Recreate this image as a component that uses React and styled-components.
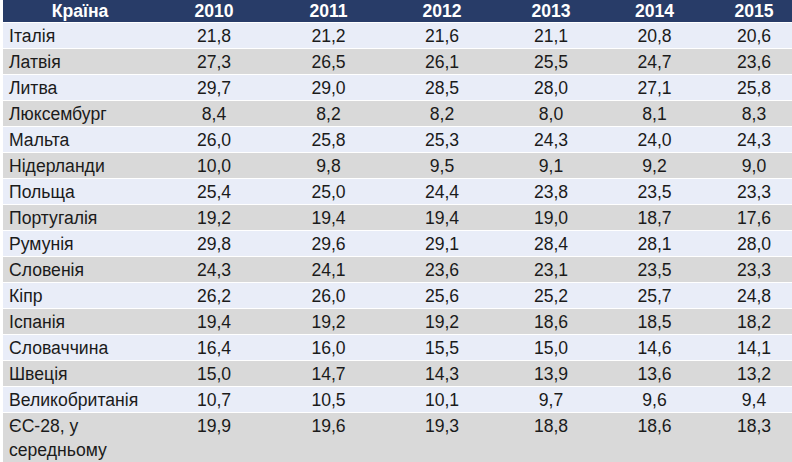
import React from "react";
import styled, { createGlobalStyle } from "styled-components";

const GlobalStyle = createGlobalStyle`
  html, body {
    margin: 0;
    padding: 0;
    background: #fff;
    overflow: hidden;
  }
  body {
    font-family: "Liberation Sans", Arial, sans-serif;
  }
`;

const Page = styled.div`
  width: 792px;
  height: 462px;
  overflow: hidden;
  padding-left: 3px;
  box-sizing: border-box;
`;

const Table = styled.table`
  width: 800px;
  table-layout: fixed;
  border-collapse: collapse;
  font-size: 17.6px;
  color: #1b1b1b;
`;

const HeadCell = styled.th`
  background: #283c68;
  color: #fff;
  font-weight: bold;
  height: 22px;
  line-height: 20px;
  padding: 0 6px;
  text-align: center;
  box-sizing: border-box;
`;

const Row = styled.tr`
  background: ${(p) => (p.$alt ? "#d9d9d9" : "#e9edf8")};
  border-top: 1px solid #fff;
`;

const Cell = styled.td`
  line-height: 24px;
  padding: 1px 6px 0;
  vertical-align: top;
  text-align: ${(p) => (p.$left ? "left" : "center")};
  box-sizing: border-box;
`;

const widths = [154, 114, 115, 112, 106, 101, 98];
const years = ["2010", "2011", "2012", "2013", "2014", "2015"];

const data = [
  ["Італія", "21,8", "21,2", "21,6", "21,1", "20,8", "20,6"],
  ["Латвія", "27,3", "26,5", "26,1", "25,5", "24,7", "23,6"],
  ["Литва", "29,7", "29,0", "28,5", "28,0", "27,1", "25,8"],
  ["Люксембург", "8,4", "8,2", "8,2", "8,0", "8,1", "8,3"],
  ["Мальта", "26,0", "25,8", "25,3", "24,3", "24,0", "24,3"],
  ["Нідерланди", "10,0", "9,8", "9,5", "9,1", "9,2", "9,0"],
  ["Польща", "25,4", "25,0", "24,4", "23,8", "23,5", "23,3"],
  ["Португалія", "19,2", "19,4", "19,4", "19,0", "18,7", "17,6"],
  ["Румунія", "29,8", "29,6", "29,1", "28,4", "28,1", "28,0"],
  ["Словенія", "24,3", "24,1", "23,6", "23,1", "23,5", "23,3"],
  ["Кіпр", "26,2", "26,0", "25,6", "25,2", "25,7", "24,8"],
  ["Іспанія", "19,4", "19,2", "19,2", "18,6", "18,5", "18,2"],
  ["Словаччина", "16,4", "16,0", "15,5", "15,0", "14,6", "14,1"],
  ["Швеція", "15,0", "14,7", "14,3", "13,9", "13,6", "13,2"],
  ["Великобританія", "10,7", "10,5", "10,1", "9,7", "9,6", "9,4"],
  ["ЄС-28, у середньому", "19,9", "19,6", "19,3", "18,8", "18,6", "18,3"],
];

export default function App() {
  return (
    <Page>
      <GlobalStyle />
      <Table>
        <colgroup>
          {widths.map((w, i) => (
            <col key={i} style={{ width: w }} />
          ))}
        </colgroup>
        <thead>
          <tr>
            <HeadCell>Країна</HeadCell>
            {years.map((y) => (
              <HeadCell key={y}>{y}</HeadCell>
            ))}
          </tr>
        </thead>
        <tbody>
          {data.map((row, i) => (
            <Row key={row[0]} $alt={i % 2 === 1}>
              {row.map((v, j) => (
                <Cell key={j} $left={j === 0}>
                  {v}
                </Cell>
              ))}
            </Row>
          ))}
        </tbody>
      </Table>
    </Page>
  );
}
